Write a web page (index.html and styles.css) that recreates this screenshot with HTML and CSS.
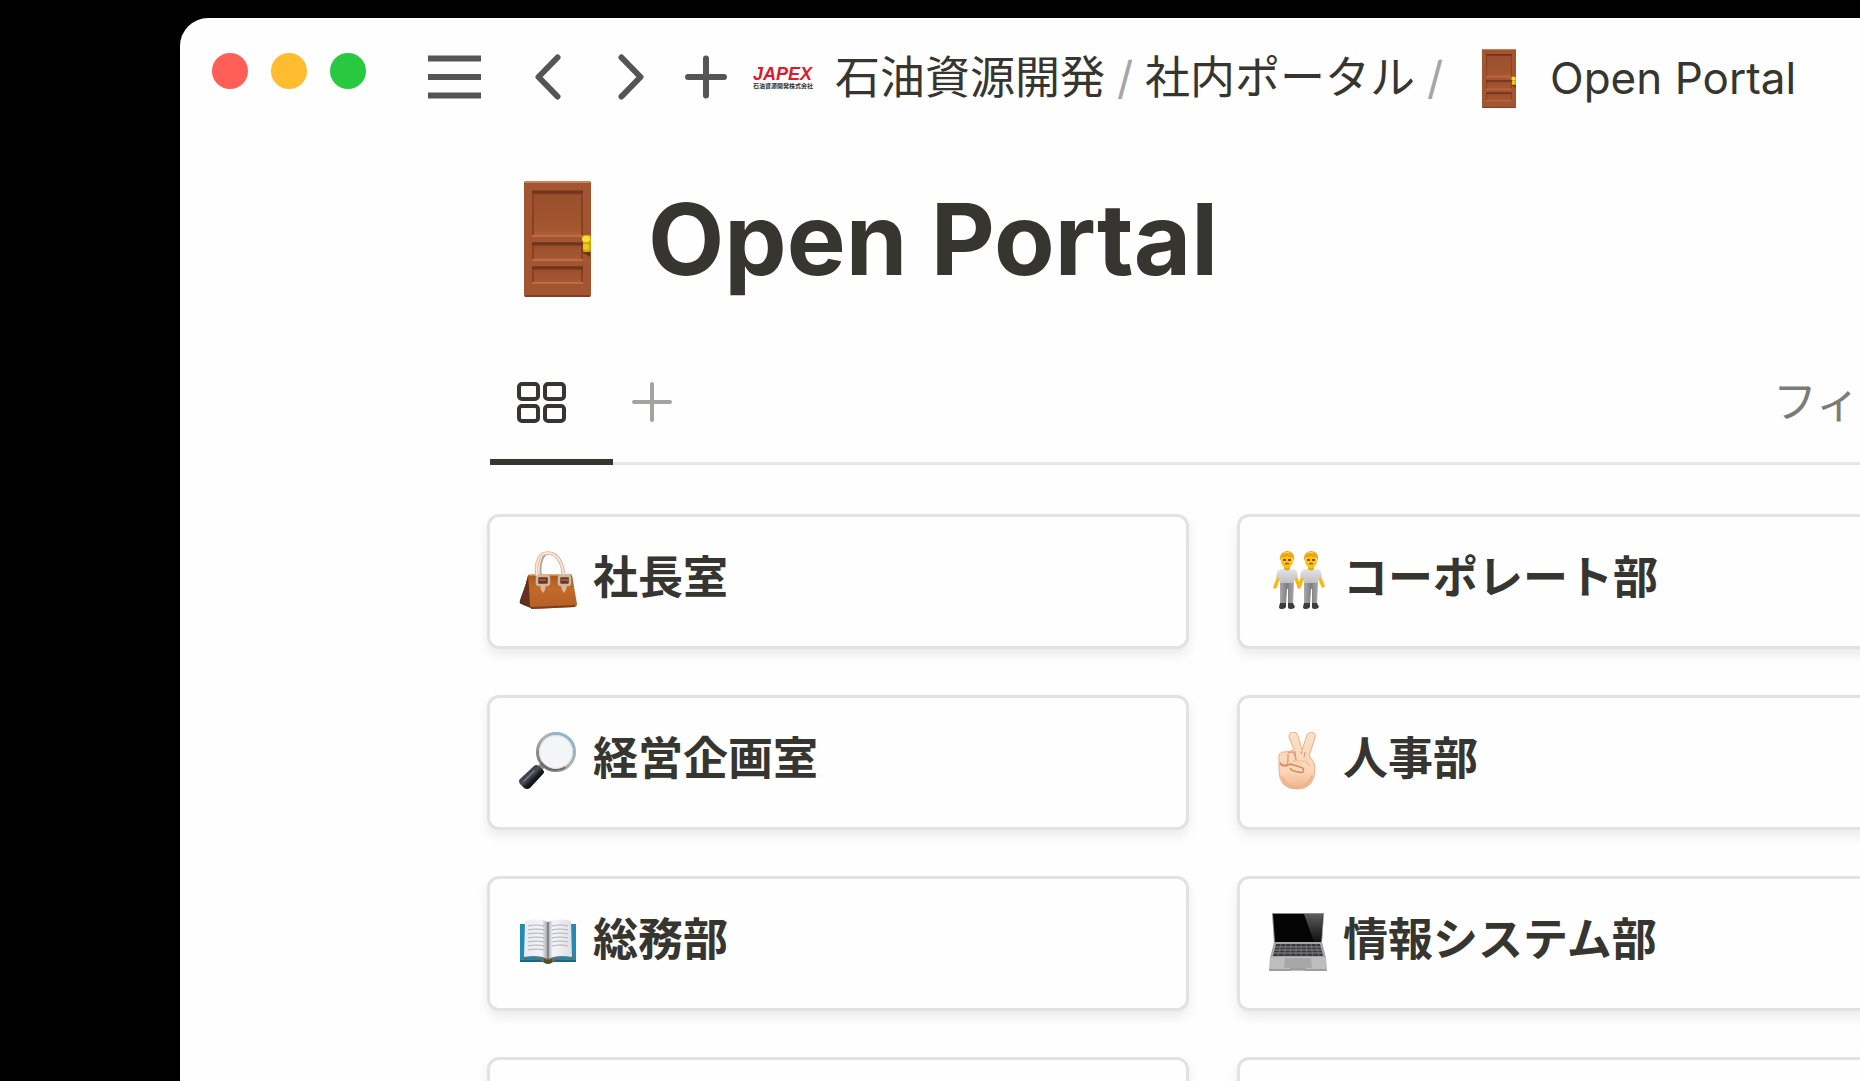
FILE: index.html
```html
<!DOCTYPE html>
<html lang="ja">
<head>
  <meta charset="UTF-8">
  <title>Open Portal</title>
  <link rel="stylesheet" href="styles.css">
</head>
<body>

  <!-- shared door icon -->
  <svg class="defs" width="0" height="0" aria-hidden="true">
    <defs>
      <linearGradient id="panel" x1="0" y1="0" x2="0" y2="1">
        <stop offset="0" stop-color="#7d3a1f"/>
        <stop offset="0.1" stop-color="#9a4f2d"/>
        <stop offset="0.85" stop-color="#a55631"/>
        <stop offset="1" stop-color="#b5633b"/>
      </linearGradient>
      <symbol id="door" viewBox="0 0 67 116">
        <rect width="67" height="116" rx="2" fill="#a35430"/>
        <path d="M1 1h65" stroke="#c98262" stroke-width="2"/>
        <path d="M1 115h65" stroke="#87401f" stroke-width="2"/>
        <rect x="8" y="10" width="51" height="46" fill="url(#panel)"/>
        <rect x="8" y="61" width="51" height="18" fill="url(#panel)"/>
        <rect x="8" y="85" width="51" height="17" fill="url(#panel)"/>
        <path d="M9 10v46M58 10v46M9 61v18M58 61v18M9 85v17M58 85v17" stroke="#87431f" stroke-width="2"/>
        <path d="M8 11h51M8 63h51M8 87h51" stroke="#71351b" stroke-width="3"/>
        <path d="M8 55h51M8 79h51M8 102h51" stroke="#bd6b43" stroke-width="2"/>
        <path d="M58 71h8v5z" fill="#6b3016"/>
        <rect x="59" y="54" width="8" height="17" rx="2" fill="#d1a60f"/>
        <rect x="58" y="55" width="8" height="6" rx="3" fill="#fbe22e"/>
        <rect x="59" y="63" width="6" height="6" rx="2" fill="#eec918"/>
      </symbol>
    </defs>
  </svg>

  <div class="window">
    <header class="toolbar">
      <div class="lights">
        <button class="light red" aria-label="閉じる"></button>
        <button class="light yellow" aria-label="最小化"></button>
        <button class="light green" aria-label="拡大"></button>
      </div>

      <div class="nav">
        <button class="icon-btn menu" aria-label="メニュー">
          <svg width="53" height="44" viewBox="0 0 53 44"><path d="M0 3.5h53M0 22h53M0 40.5h53"/></svg>
        </button>
        <button class="icon-btn back" aria-label="戻る">
          <svg width="26" height="46" viewBox="0 0 26 46"><path d="M22.5 3.5L3.5 23l19 19.5"/></svg>
        </button>
        <button class="icon-btn forward" aria-label="進む">
          <svg width="26" height="46" viewBox="0 0 26 46"><path d="M3.5 3.5l19 19.5-19 19.5"/></svg>
        </button>
        <button class="icon-btn" aria-label="新規">
          <svg width="42" height="44" viewBox="0 0 42 44"><path d="M3 22h36M21 3.5v37"/></svg>
        </button>
      </div>

      <nav class="crumbs">
        <a class="logo" href="#">
          <span class="logo-name">JAPEX</span>
          <span class="logo-sub">石油資源開発株式会社</span>
        </a>
        <a href="#">石油資源開発</a>
        <span class="slash">/</span>
        <a href="#">社内ポータル</a>
        <span class="slash">/</span>
        <a class="current" href="#">
          <svg class="door-small"><use href="#door"/></svg>
          Open Portal
        </a>
      </nav>
    </header>

    <main class="page">
      <div class="title">
        <svg class="door-large"><use href="#door"/></svg>
        <h1>Open Portal</h1>
      </div>

      <div class="tabs">
        <button class="tab" aria-label="ギャラリー">
          <svg width="49" height="42" viewBox="0 0 49 42">
            <rect x="2" y="2" width="19" height="15" rx="3"/>
            <rect x="28" y="2" width="19" height="15" rx="3"/>
            <rect x="2" y="24" width="19" height="15" rx="3"/>
            <rect x="28" y="24" width="19" height="15" rx="3"/>
          </svg>
        </button>
        <button class="add" aria-label="ビューを追加">
          <svg width="40" height="40" viewBox="0 0 40 40"><path d="M2 20h36M20 2v36"/></svg>
        </button>
        <button class="filter">フィ</button>
      </div>

      <div class="gallery">
        <a class="card" href="#">
          <svg class="emoji" viewBox="0 0 58 58">
            <defs>
              <linearGradient id="leather" x1="0" y1="0" x2="0" y2="1">
                <stop offset="0" stop-color="#a95720"/>
                <stop offset="0.4" stop-color="#c26a2b"/>
                <stop offset="1" stop-color="#b45f25"/>
              </linearGradient>
            </defs>
            <path d="M22 26C20 12 24 2 31 2s12 8 13 24" fill="none" stroke="#c99b86" stroke-width="2"/>
            <path d="M10 24L1 49q-1 3 1 4l12 5 2-30z" fill="#5c2b1c"/>
            <path d="M4 46l8-19 1 29z" fill="#7b3c24"/>
            <path d="M9 24h44l5 29q0 3-3 3l-40 2q-3 0-4-3L7 32z" fill="url(#leather)"/>
            <path d="M9 25L2 50l9 6-1-20z" fill="#66301e"/>
            <path d="M10 24h43" stroke="#dc9359" stroke-width="1.5"/>
            <path d="M12 57l44-2" stroke="#813d18" stroke-width="2"/>
            <path d="M18 25C16 9 21 2 29 2s15 8 16 25" fill="none" stroke="#dfb19c" stroke-width="3.6"/>
            <path d="M18 25C16 9 21 2 29 2s15 8 16 25" fill="none" stroke="#fae5da" stroke-width="1.8"/>
            <path d="M21 34h6l-1 5-2 3-2-3zM42 34h6l-1 5-2 3-2-3z" fill="#e5b394"/>
            <rect x="18" y="25" width="12" height="9" rx="2" fill="#6e351a" stroke="#cdb7ab" stroke-width="2.5"/>
            <rect x="40" y="25" width="11" height="9" rx="2" fill="#6e351a" stroke="#cdb7ab" stroke-width="2.5"/>
            <path d="M20 29h7M42 29h7" stroke="#a45a2f" stroke-width="2"/>
          </svg>
          <span>社長室</span>
        </a>

        <a class="card" href="#">
          <svg class="emoji" viewBox="0 0 58 58">
            <defs>
              <linearGradient id="shirt" x1="0" y1="0" x2="0" y2="1">
                <stop offset="0" stop-color="#e4e4e8"/>
                <stop offset="1" stop-color="#b9b9bf"/>
              </linearGradient>
              <linearGradient id="pants" x1="0" y1="0" x2="1" y2="0">
                <stop offset="0" stop-color="#a8a8aa"/>
                <stop offset="0.5" stop-color="#7f7f82"/>
                <stop offset="1" stop-color="#a8a8aa"/>
              </linearGradient>
              <g id="person">
                <path d="M-7 23l-5 13M7 23l5 12" stroke="#f7b917" stroke-width="3.5" stroke-linecap="round"/>
                <path d="M-3 13h6v7h-6z" fill="#eda514"/>
                <path d="M-3 18q-6 0-7 3l-1 5 4 2v6H7v-6l4-2-1-5q-1-3-7-3-3 3-6 0z" fill="url(#shirt)"/>
                <path d="M-7 32H7l-1 21H1V38h-1l-1 15h-6z" fill="url(#pants)"/>
                <path d="M-7 52h6v4q-1 2-4 2t-3-2zM1 52h5l2 4q-1 2-4 2t-3-2z" fill="#3f3a3b"/>
                <ellipse cx="0" cy="10" rx="6" ry="7" fill="#fbc51d"/>
                <path d="M-7 10Q-8 1 0 0q8 0 7 10l-2-4q-3 1-5-1-2 2-5 1z" fill="#efa20d"/>
                <path d="M-5 3Q0-1 5 3 1 1-5 3z" fill="#ffe27a"/>
                <path d="M-4 9h3M1 9h3" stroke="#8b5209" stroke-width="1.8"/>
                <path d="M-2 13q2-1 4 0" fill="none" stroke="#a44716" stroke-width="1.3"/>
              </g>
            </defs>
            <use href="#person" x="18"/>
            <use href="#person" x="42"/>
          </svg>
          <span>コーポレート部</span>
        </a>

        <a class="card" href="#">
          <svg class="emoji" viewBox="0 0 58 58">
            <defs>
              <linearGradient id="rim" x1="0" y1="1" x2="1" y2="0">
                <stop offset="0" stop-color="#66686d"/>
                <stop offset="0.5" stop-color="#b1afad"/>
                <stop offset="1" stop-color="#7fb7df"/>
              </linearGradient>
              <linearGradient id="grip" x1="0" y1="0" x2="1" y2="1">
                <stop offset="0" stop-color="#101316"/>
                <stop offset="0.45" stop-color="#4a5058"/>
                <stop offset="0.6" stop-color="#14171b"/>
                <stop offset="1" stop-color="#050607"/>
              </linearGradient>
            </defs>
            <path d="M25 32l-5 5" stroke="#8d8a89" stroke-width="6"/>
            <path d="M15 34q2-2 5 0l4 4q2 2 0 4L11 56q-3 2-6 0l-4-4q-2-3 0-5z" fill="url(#grip)"/>
            <circle cx="37" cy="20" r="18.5" fill="#f4f5f7" stroke="url(#rim)" stroke-width="3"/>
            <path d="M22 31Q33 42 46 35" fill="none" stroke="#6f6664" stroke-width="2"/>
            <circle cx="37" cy="20" r="16.5" fill="none" stroke="#dcdfe3" stroke-width="1"/>
            <path d="M5 49l10-10" stroke="#727981" stroke-width="1.5" stroke-linecap="round"/>
          </svg>
          <span>経営企画室</span>
        </a>

        <a class="card" href="#">
          <svg class="emoji" viewBox="0 0 58 58">
            <defs>
              <linearGradient id="skin" x1="0" y1="0" x2="0" y2="1">
                <stop offset="0" stop-color="#fde0c6"/>
                <stop offset="0.7" stop-color="#fbd5b5"/>
                <stop offset="1" stop-color="#efb28a"/>
              </linearGradient>
            </defs>
            <path d="M10 24q1-5 6-4l6-1 3-1-5-13q0-5 4-5 4 0 5 4l4 14 5-15q2-4 5-3 4 1 3 6l-6 18q6 5 6 12 0 21-18 21Q10 57 10 38z" fill="url(#skin)" stroke="#e9b08b" stroke-width="1"/>
            <path d="M26 19l1 9M33 19l-1 3M36 20l-1 5" fill="none" stroke="#dc9970" stroke-width="1.2"/>
            <path d="M11 30q1 4 6 3 2-1 2-5v-6M19 21q6-3 7 3l1 5" fill="none" stroke="#dfa07a" stroke-width="1.5"/>
            <path d="M11 32q5 4 10 0l10 3q5 1 3 5-3 1-9-1-2 0-4-3" fill="none" stroke="#d48c66" stroke-width="1.6"/>
            <path d="M23 29h10q6 0 7 5" fill="none" stroke="#f3c3a1" stroke-width="1.5"/>
            <path d="M13 45q5 10 15 10 11 0 15-11" fill="none" stroke="#f0b48d" stroke-width="2"/>
          </svg>
          <span>人事部</span>
        </a>

        <a class="card" href="#">
          <svg class="emoji" viewBox="0 0 58 58">
            <defs>
              <linearGradient id="pageleft" x1="0" y1="0" x2="1" y2="0">
                <stop offset="0" stop-color="#e9e9ef"/>
                <stop offset="0.75" stop-color="#f3f3f7"/>
                <stop offset="1" stop-color="#9b9ba3"/>
              </linearGradient>
              <linearGradient id="pageright" x1="0" y1="0" x2="1" y2="0">
                <stop offset="0" stop-color="#a5a5ad"/>
                <stop offset="0.2" stop-color="#f5f5f8"/>
                <stop offset="1" stop-color="#dfdfe7"/>
              </linearGradient>
            </defs>
            <path d="M1 11h56v38H34q-5 3-10 0H1z" fill="#238bb0"/>
            <path d="M1 47h56v2H34q-5 3-10 0H1z" fill="#126888"/>
            <path d="M5 42l3 3h43l3-3v4q-12-1-21 3h-8q-9-4-20-3z" fill="#74645b"/>
            <path d="M6 8q14-4 23 1v37q-10-5-24-2z" fill="url(#pageleft)"/>
            <path d="M29 9q10-5 23-1l1 36q-14-3-24 2z" fill="url(#pageright)"/>
            <path d="M29 9v37" stroke="#77777e" stroke-width="1.5"/>
            <path d="M9 13q8-2 16 0M9 17q8-2 16 0M9 21q8-2 16 0M9 25q8-2 16 0M9 29q8-2 16 0M9 33q8-2 16 0M9 37q8-2 16 0M33 13q8-2 16 0M33 17q8-2 16 0M33 21q8-2 16 0M33 25q8-2 16 0M33 29q8-2 16 0M33 33q8-2 16 0" fill="none" stroke="#b2b2bc" stroke-width="1.2"/>
            <path d="M25 46q4 2 8 0v3q-4 4-8 0z" fill="#544f1c"/>
          </svg>
          <span>総務部</span>
        </a>

        <a class="card" href="#">
          <svg class="emoji" viewBox="0 0 58 58">
            <defs>
              <linearGradient id="glare" x1="0" y1="0" x2="0" y2="1">
                <stop offset="0" stop-color="#5c5c5c"/>
                <stop offset="1" stop-color="#101010"/>
              </linearGradient>
            </defs>
            <path d="M3 0h52l-2 30H5z" fill="#8c8c8c"/>
            <path d="M4 1h50l-2 28H6z" fill="#050505"/>
            <path d="M35 1h19l-2 28h-7z" fill="url(#glare)"/>
            <path d="M5 29h48l4 16H1z" fill="#a5a5a7"/>
            <path d="M7 31h44l3 12H4z" fill="#39393b"/>
            <path d="M6 34h46M5 37h48M5 40h49" stroke="#8c8c8f" stroke-width="1"/>
            <path d="M12 31l-3 12M17 31l-2 12M22 31l-1 12M27 31v12M32 31v12M37 31l1 12M42 31l2 12M47 31l3 12" stroke="#7c7c7f" stroke-width="0.8"/>
            <path d="M1 44h56l1 12-1 2H1l-1-2z" fill="#bdbdbf"/>
            <path d="M16 45h26l1 10H15z" fill="#a7a7a9"/>
            <path d="M0 57h21l1-1h14l1 1h21" fill="none" stroke="#929294" stroke-width="1.5"/>
          </svg>
          <span>情報システム部</span>
        </a>

        <a class="card" href="#" aria-label="部署"></a>
        <a class="card" href="#" aria-label="部署"></a>
      </div>
    </main>
  </div>

</body>
</html>
```
FILE: styles.css
```css
* {
  box-sizing: border-box;
}

body {
  margin: 0;
  height: 100vh;
  padding: 18px 0 0 180px;
  overflow: hidden;
  background: #000;
  color: #373530;
  font-family: Inter, "Noto Sans CJK JP", sans-serif;
}

button {
  padding: 0;
  border: 0;
  background: none;
  font: inherit;
  cursor: pointer;
}

a {
  color: inherit;
  text-decoration: none;
}

svg {
  display: block;
  flex: none;
}

.defs {
  position: absolute;
}

.window {
  height: 100%;
  border-top-left-radius: 28px;
  background: #fefefe;
  overflow: hidden;
}

/* toolbar */
.toolbar {
  display: flex;
  align-items: center;
  height: 118px;
  padding-left: 32px;
  white-space: nowrap;
}

.lights {
  display: flex;
  gap: 23px;
  margin-right: 62px;
  padding-bottom: 12px;
}

.light {
  width: 36px;
  height: 36px;
  border-radius: 50%;
}

.red { background: #ff5f57; }
.yellow { background: #febc2e; }
.green { background: #28c840; }

.nav {
  display: flex;
  align-items: center;
  margin-right: 26px;
}

.icon-btn {
  margin-right: 41px;
}

.icon-btn:last-child {
  margin-right: 0;
}

.icon-btn.menu {
  margin-right: 54px;
}

.icon-btn.back {
  margin-right: 57px;
}

.icon-btn svg {
  fill: none;
  stroke: #555;
  stroke-width: 6;
  stroke-linecap: round;
  stroke-linejoin: round;
}

.icon-btn.menu svg {
  stroke-linecap: butt;
}

.crumbs {
  display: flex;
  align-items: center;
  padding-top: 2px;
  font-size: 45px;
  line-height: 60px;
}

.logo {
  display: flex;
  flex-direction: column;
  width: 60px;
  margin-right: 22px;
}

.logo-name {
  color: #e0182d;
  font: italic bold 18px/15px "Liberation Sans", sans-serif;
}

.logo-sub {
  color: #333;
  font-size: 6px;
  font-weight: bold;
  line-height: 8px;
}

.slash {
  width: 40px;
  color: #a5a5a3;
  text-align: center;
}

.current {
  display: flex;
  align-items: center;
  gap: 34px;
  padding-left: 27px;
  font-size: 44px;
}

.door-small {
  width: 34px;
  height: 59px;
}

/* page */
.page {
  padding: 45px 0 0 307px;
}

.title {
  display: flex;
  align-items: center;
  gap: 57px;
  padding-left: 37px;
}

.door-large {
  width: 67px;
  height: 116px;
}

h1 {
  margin: 0;
  font-size: 99px;
  line-height: 116px;
  font-weight: 700;
}

.tabs {
  display: flex;
  align-items: stretch;
  height: 126px;
  margin: 42px 0 49px 3px;
  box-shadow: inset 0 -3px #e6e6e5;
}

.tab {
  width: 123px;
  padding: 8px 0 0 27px;
  border-bottom: 6px solid #373530;
}

.tab svg {
  fill: none;
  stroke: #373530;
  stroke-width: 4;
}

.add {
  margin-left: 19px;
}

.add svg {
  fill: none;
  stroke: #a3a3a2;
  stroke-width: 4;
  stroke-linecap: round;
}

.filter {
  margin-left: auto;
  padding-bottom: 6px;
  color: #7b7b79;
  font-size: 44px;
}

.gallery {
  display: grid;
  grid-template-columns: repeat(2, minmax(702px, 1fr));
  gap: 46px 48px;
}

.card {
  display: flex;
  align-items: center;
  gap: 16px;
  height: 135px;
  padding: 0 29px 4px;
  border: 3px solid #e2e2e2;
  border-radius: 12px;
  background: #fefefe;
  box-shadow: 0 6px 12px rgba(0, 0, 0, 0.08);
  font-size: 45px;
  line-height: 60px;
  font-weight: 600;
  white-space: nowrap;
}

.card span {
  padding-bottom: 4px;
}

.emoji {
  width: 58px;
  height: 58px;
}
```
